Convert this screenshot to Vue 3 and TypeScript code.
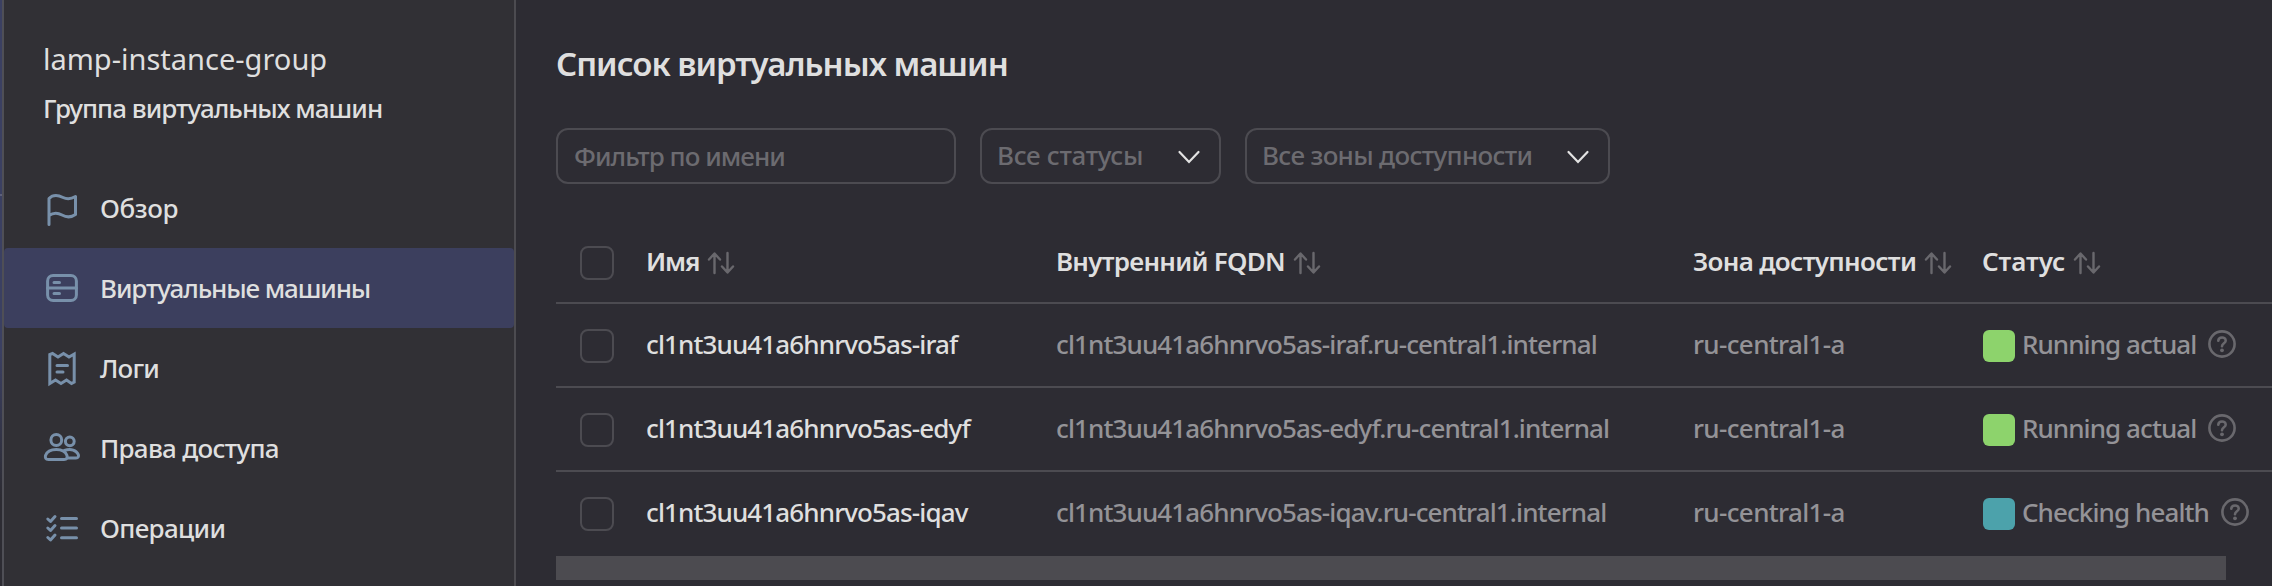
<script setup lang="ts">
interface NavItem { icon: string; label: string; tracking: number; active?: boolean }
interface Column { key: string; label: string; tracking: number }
interface Machine { name: string; fqdn: string; zone: string; status: string; tone: string; tracking: number }

const nav: NavItem[] = [
  { icon: 'flag', label: 'Обзор', tracking: -0.45 },
  { icon: 'server', label: 'Виртуальные машины', tracking: -1.12, active: true },
  { icon: 'logs', label: 'Логи', tracking: -0.8 },
  { icon: 'users', label: 'Права доступа', tracking: -0.72 },
  { icon: 'list', label: 'Операции', tracking: -0.66 },
]
const columns: Column[] = [
  { key: 'name', label: 'Имя', tracking: -1.16 },
  { key: 'fqdn', label: 'Внутренний FQDN', tracking: -0.74 },
  { key: 'zone', label: 'Зона доступности', tracking: -0.68 },
  { key: 'status', label: 'Статус', tracking: -0.1 },
]
const machines: Machine[] = ['iraf', 'edyf', 'iqav'].map((id, i) => ({
  name: `cl1nt3uu41a6hnrvo5as-${id}`,
  fqdn: `cl1nt3uu41a6hnrvo5as-${id}.ru-central1.internal`,
  zone: 'ru-central1-a',
  status: i < 2 ? 'Running actual' : 'Checking health',
  tone: i < 2 ? 'green' : 'teal',
  tracking: i < 2 ? -0.93 : -0.91,
}))
const spacing = (v: number) => ({ letterSpacing: `${v}px` })
</script>

<template>
  <div class="page">
    <div class="rail"><div class="rail-top"></div><div class="rail-bottom"></div></div>
    <aside class="sidebar">
      <header class="group">
        <div class="group-name">lamp-instance-group</div>
        <div class="group-kind">Группа виртуальных машин</div>
      </header>
      <nav>
        <a v-for="n in nav" :key="n.label" class="nav-item" :class="{ active: n.active }">
          <svg class="nav-icon" viewBox="0 0 40 40" width="40" height="40">
            <path v-if="n.icon === 'flag'" d="M7 36.500V10.500C12 5.500 18 8 21 9.500S28.500 11.500 33.500 8.500V26.500C28.500 30 23.500 29 20 27S12 24 7 27.500" />
            <g v-else-if="n.icon === 'server'">
              <rect x="5.600" y="7.500" width="28.800" height="25" rx="5.500" />
              <path d="M5.600 20H34.400M12 14.500h5.500M12 25.500h5.500" />
            </g>
            <g v-else-if="n.icon === 'logs'">
              <path class="miter" d="M7.800 34.500V6.500L10.500 5.500L16 9L21.500 5.500L27 9L32.200 6V34L29.500 35.500L24.500 32L19 35.500L13.500 32L7.800 35.500Z" />
              <path d="M15 17.500h10.500M15 24h6" />
            </g>
            <g v-else-if="n.icon === 'users'">
              <circle cx="14.300" cy="12" r="5.400" />
              <circle cx="27.800" cy="13.300" r="4.400" />
              <path d="M6.500 31.500C3.500 31.500 3 29.500 3.500 27.500C5 23.500 9.500 21.500 14.300 21.500S23.500 23.500 25 27.500C25.500 29.500 25 31.500 22 31.500Z" />
              <path d="M22.500 22.500C29 20 34.500 22.500 36.300 26.500C37 28.500 36 30 34 30H25.500" />
            </g>
            <g v-else>
              <path d="M19.500 10.500H34.500M19.500 20H34.500M19.500 29.700H34.500" />
              <path d="M5.800 11L8.500 13.500L13 8.500M5.800 20L8.500 22.500L13 17.500M5.800 29.500L8.500 32L13 27" />
            </g>
          </svg>
          <span :style="spacing(n.tracking)">{{ n.label }}</span>
        </a>
      </nav>
    </aside>

    <main class="content">
      <h1 class="title">Список виртуальных машин</h1>
      <div class="filters">
        <div class="field name-filter"><span>Фильтр по имени</span></div>
        <div class="field status-filter">
          <span>Все статусы</span>
          <svg width="24" height="14" viewBox="0 0 24 14"><path d="M2.500 2L12 12L21.500 2" /></svg>
        </div>
        <div class="field zone-filter">
          <span>Все зоны доступности</span>
          <svg width="24" height="14" viewBox="0 0 24 14"><path d="M2.500 2L12 12L21.500 2" /></svg>
        </div>
      </div>

      <div class="table">
        <div class="row head">
          <div class="cell"><i class="check"></i></div>
          <div v-for="c in columns" :key="c.key" class="cell">
            <span class="label" :style="spacing(c.tracking)">{{ c.label }}</span>
            <svg class="sort" width="28" height="24" viewBox="0 0 28 24">
              <path d="M7.500 22V3M2 8.500L7.500 2.500L13 8.500M20.500 2V21M15 15.500L20.500 21.500L26 15.500" />
            </svg>
          </div>
        </div>
        <div v-for="m in machines" :key="m.name" class="row">
          <div class="cell"><i class="check"></i></div>
          <div class="cell name"><span class="label">{{ m.name }}</span></div>
          <div class="cell fqdn"><span class="label">{{ m.fqdn }}</span></div>
          <div class="cell zone"><span class="label">{{ m.zone }}</span></div>
          <div class="cell status">
            <i class="dot" :class="m.tone"></i>
            <span class="label" :style="spacing(m.tracking)">{{ m.status }}</span>
            <svg class="help" width="28" height="28" viewBox="0 0 28 28">
              <circle cx="14" cy="14" r="12.600" />
              <path d="M10.300 10.800C10.500 6.300 17.800 6.500 17.700 10.800C17.600 13.300 14 13.300 14 16.300" />
              <circle class="solid" cx="14" cy="20.300" r="1.900" />
            </svg>
          </div>
        </div>
      </div>
      <div class="scrollbar"></div>
    </main>
  </div>
</template>

<style>
body { background: #2d2c33; overflow: hidden; }
</style>

<style scoped>
* { box-sizing: border-box; }
.page { display: flex; width: 2272px; height: 586px; overflow: hidden; background: #2d2c33; color: #dfdfdf; font: 500 26px "Noto Sans", sans-serif; white-space: nowrap; }
.rail { width: 2px; flex: none; background: linear-gradient(#3b4062 0 60%, #2d2c33 85%); }
.rail-top { height: 194px; }
.rail-bottom { height: 2px; background: #5d607b; }
.sidebar { width: 514px; flex: none; background: #313035; border-left: 2px solid #4f4f56; border-right: 2px solid #4c4b50; }
.group { height: 168px; padding: 39px 0 0 40px; }
.group-name { font-size: 29px; line-height: 40px; margin-left: -1px; font-weight: 400; }
.group-kind { line-height: 36px; margin-top: 11px; margin-left: -1px; letter-spacing: -0.97px; }
.nav-item { display: flex; align-items: center; height: 80px; padding-left: 38px; gap: 18px; border-radius: 4px; }
.nav-item.active { background: #3c3f5e; }
.nav-icon { fill: none; stroke: #7890aa; stroke-width: 3; stroke-linecap: round; stroke-linejoin: round; }
.nav-icon .miter { stroke-linejoin: miter; }

.content { flex: 1; min-width: 0; padding-left: 40px; }
.title { margin: 0; padding-top: 40px; height: 128px; font-size: 33px; line-height: 48px; font-weight: 600; letter-spacing: -1px; }
.filters { display: flex; gap: 24px; height: 56px; color: #6c6b70; }
.field { display: flex; align-items: center; justify-content: space-between; padding: 0 18px 3px 15px; border: 2px solid #4c4b51; border-radius: 12px; }
.name-filter { width: 400px; letter-spacing: -0.95px; padding: 0 0 1px 16px; }
.status-filter { width: 241px; letter-spacing: -0.35px; }
.zone-filter { width: 365px; letter-spacing: -0.68px; }
.field svg { fill: none; stroke: #e3e3e3; stroke-width: 2.2; stroke-linecap: round; margin-top: 4px; }

.table { margin-top: 36px; }
.row { display: grid; grid-template-columns: 90px 410px 637px 289px 1fr; height: 84px; border-bottom: 2px solid #4c4b51; }
.row:last-child { border-bottom-color: transparent; }
.cell { display: flex; align-items: center; padding-bottom: 2px; }
.cell:first-child { padding: 2px 0 0 24px; }
.head .cell { padding-bottom: 0; }
.head .cell:first-child { padding-top: 4px; }
.check { width: 34px; height: 34px; border: 2px solid #4c4b51; border-radius: 8px; }
.head .label { font-weight: 600; }
.sort { margin: 3px 0 0 8px; fill: none; stroke: #69686d; stroke-width: 2.4; stroke-linecap: round; stroke-linejoin: round; }
.name { letter-spacing: -0.88px; }
.fqdn, .zone, .status { color: #949397; }
.fqdn { letter-spacing: -0.88px; }
.zone { letter-spacing: -0.64px; }
.dot { width: 32px; height: 32px; margin: 4px 7px 0 1px; border-radius: 6px; }
.green { background: #8dd36c; }
.teal { background: #4ca2ab; }
.help { margin-left: 12px; fill: none; stroke: #69686d; stroke-width: 2.6; stroke-linecap: round; }
.help .solid { fill: #69686d; stroke: none; }
.scrollbar { width: 1670px; height: 24px; background: #4c4b50; }
</style>
